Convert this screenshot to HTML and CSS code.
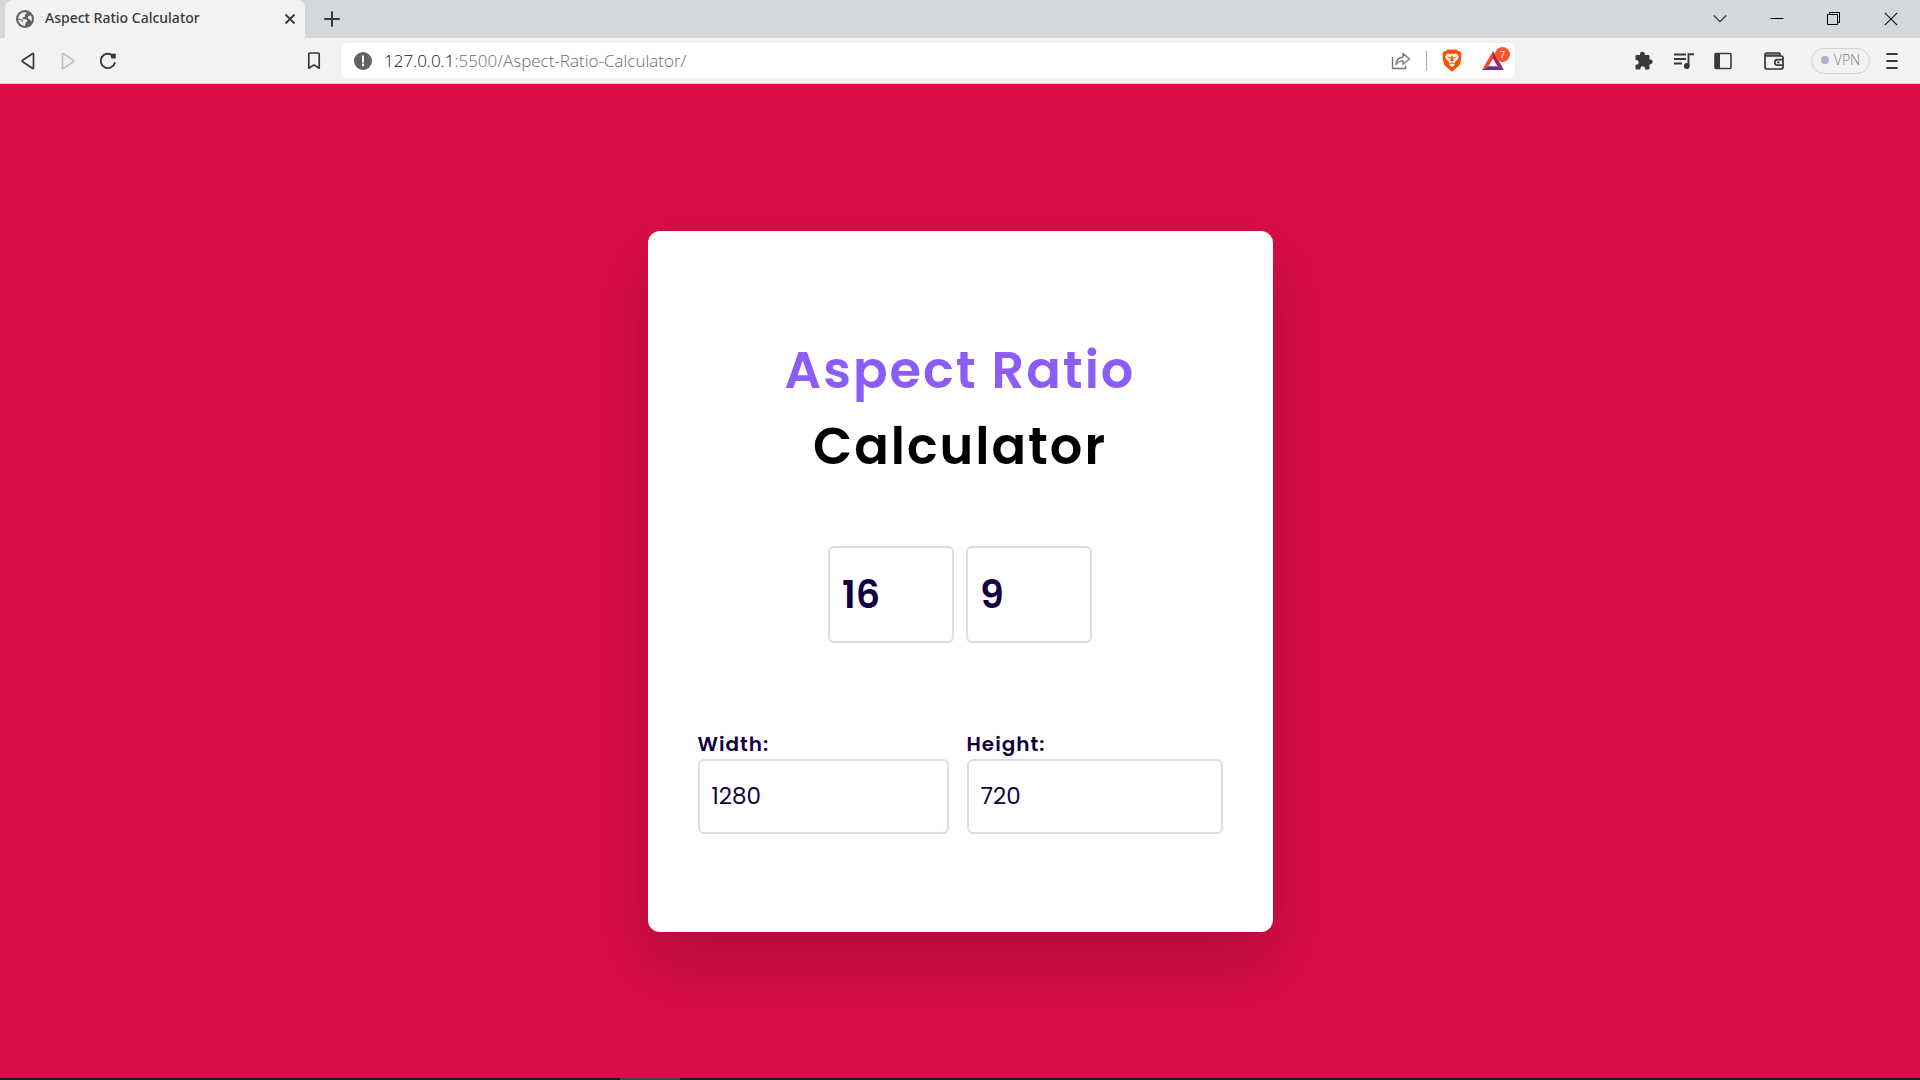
FILE: index.html
```html
<!DOCTYPE html>
<html lang="en">
<head>
<meta charset="utf-8">
<title>Aspect Ratio Calculator</title>
<link rel="stylesheet" href="styles.css">
</head>
<body>
<header class="browser">
  <div class="tabstrip">
    <div class="tab">
      <svg class="tab-icon" width="18" height="18" viewBox="0 0 18 18"><circle cx="9" cy="9" r="9" fill="#5f6368"/><path d="M2.200 8.500C2.500 5 5 2.500 8.500 2.200L11 3 8.800 5 9 6.800 6.500 7.500 6.800 9 10.500 9.500 11.500 11.500 9.500 12.500 9 15.800C5.500 15.800 2.500 13 2.200 9.500L5 10 6.500 12 7.500 11.500 6 9.200ZM12 6.500 14.800 5.300C16 7.500 16.200 9.500 15.500 11.500L13.500 9 12 8.500Z" fill="#f2f2f2"/></svg>
      <span class="tab-title">Aspect Ratio Calculator</span>
      <button class="icon-button tab-close" aria-label="Close tab"><svg width="12" height="12" viewBox="0 0 12 12"><path d="M1.500 1.500 10.500 10.500M10.500 1.500 1.500 10.500" stroke="#36393d" stroke-width="1.800"/></svg></button>
    </div>
    <button class="icon-button new-tab" aria-label="New tab"><svg width="16" height="16" viewBox="0 0 16 16"><path d="M8 1V15M1 8H15" stroke="#36393d" stroke-width="2" stroke-linecap="round"/></svg></button>
    <div class="window-controls">
      <button class="icon-button window-button" aria-label="Search tabs"><svg width="14" height="14" viewBox="0 0 14 14"><path d="M.8 3.500 7 9.700 13.200 3.500" fill="none" stroke="#333" stroke-width="1.100"/></svg></button>
      <button class="icon-button window-button" aria-label="Minimize"><svg width="14" height="14" viewBox="0 0 14 14"><path d="M.5 6.500H13.500" stroke="#000"/></svg></button>
      <button class="icon-button window-button" aria-label="Restore"><svg width="14" height="14" viewBox="0 0 14 14"><path d="M.5 2.500H10.500V12.500H.5ZM2.500 2.500V.5H12.500V10.500H10.500" fill="none" stroke="#000"/></svg></button>
      <button class="icon-button window-button" aria-label="Close"><svg width="14" height="14" viewBox="0 0 14 14"><path d="M.8.8 13.200 13.200M13.200.8.8 13.200" stroke="#111" stroke-width="1.100"/></svg></button>
    </div>
  </div>
  <div class="toolbar">
    <div class="nav">
      <button class="icon-button nav-button" aria-label="Back"><svg width="18" height="18" viewBox="0 0 18 18"><path d="M14.500 2.200V15.800Q14.500 17 13.400 16.300L3.600 9.700Q2.700 9 3.600 8.300L13.400 1.700Q14.500 1 14.500 2.200Z" fill="none" stroke="#36393d" stroke-width="1.700"/></svg></button>
      <button class="icon-button nav-button" aria-label="Forward" disabled><svg width="18" height="18" viewBox="0 0 18 18"><path d="M3.500 2.200V15.800Q3.500 17 4.600 16.300L14.400 9.700Q15.300 9 14.400 8.300L4.600 1.700Q3.500 1 3.500 2.200Z" fill="none" stroke="#c1c1c1" stroke-width="1.700"/></svg></button>
      <button class="icon-button nav-button" aria-label="Reload"><svg width="18" height="18" viewBox="0 0 18 18"><path d="M13.800 3.600A7.200 7.200 0 1 0 15.800 11" fill="none" stroke="#36393d" stroke-width="1.900" stroke-linecap="round"/><path d="M12.500 2.500Q14 1 16.800 1.800V6.600H12.600Q11 4.500 12.500 2.500Z" fill="#36393d"/></svg></button>
    </div>
    <button class="icon-button bookmark" aria-label="Bookmark"><svg width="14" height="18" viewBox="0 0 14 18"><path d="M1.800 2.200Q1.800 1 3 1H11Q12.200 1 12.200 2.200V16.200L7 12.900 1.800 16.200Z" fill="none" stroke="#36393d" stroke-width="1.700" stroke-linejoin="round"/></svg></button>
    <div class="address-bar">
      <svg class="site-info" width="18" height="18" viewBox="0 0 18 18"><circle cx="9" cy="9" r="9" fill="#5f6368"/><path d="M9 4.300V9.700M9 12.200V13.600" stroke="#fff" stroke-width="2" stroke-linecap="round"/></svg>
      <a class="url" href="#"><span class="url-host">127.0.0.1</span>:5500/Aspect-Ratio-Calculator/</a>
      <div class="address-actions">
        <button class="icon-button" aria-label="Share"><svg width="20" height="18" viewBox="0 0 20 18"><path d="M1.500 5V16.500H14.500V13.500" fill="none" stroke="#777" stroke-width="1.400"/><path d="M5 12.500C5.300 8 8 5.200 12 5.200V1.600L18.600 7 12 12.200V8.900C9 8.900 6.800 10 5 12.500Z" fill="none" stroke="#777" stroke-width="1.400" stroke-linejoin="round"/></svg></button>
        <span class="divider"></span>
        <button class="icon-button" aria-label="Brave Shields"><svg width="20" height="23" viewBox="0 0 20 23"><path d="M5.500.5H14.500L16.500 2.500 18.300 2.300 19.500 5 19 6.800 19.500 9 17.800 16 10 22.700 2.200 16 .5 9 1 6.800.5 5 1.700 2.300 3.500 2.500Z" fill="#ff5000"/><path d="M5.500 4.500 8 5 10 4.700 12 5 14.500 4.500 16.800 7.500 15.800 10.300 12.800 13 13 14.500 10 13.300 7 14.500 7.200 13 4.200 10.300 3.200 7.500ZM7 15.800 10 14.300 13 15.800 10 18.300Z" fill="#fff"/><path d="M4.800 7.600 8.800 8.200 8.300 9.900ZM15.200 7.600 11.200 8.200 11.700 9.900ZM9.300 6.500H10.700L11 10 12 11.700 10 12.700 8 11.700 9 10Z" fill="#ff5000"/></svg></button>
        <button class="icon-button rewards" aria-label="Brave Rewards, 7 new"><svg width="24" height="21" viewBox="0 0 24 21"><path d="M12 1 1 20 7.500 16.300 12 8.500Z" fill="#ff4724"/><path d="M1 20H23L16.500 16.300H7.500Z" fill="#662d91"/><path d="M12 1V8.500L16.500 16.300 23 20Z" fill="#9e1f63"/></svg><span class="badge">7</span></button>
      </div>
    </div>
    <div class="tools">
      <button class="icon-button" aria-label="Extensions"><svg width="20" height="20" viewBox="0 0 20 20"><path d="M1.500 5Q1.500 4 2.500 4H6V3.200A2.400 2.400 0 0 1 10.800 3.200V4H14.500Q15.500 4 15.500 5V8.500H16.300A2.300 2.300 0 0 1 16.300 13.200H15.500V17.500Q15.500 18.500 14.500 18.500H11V17.500A2.300 2.300 0 0 0 6.400 17.500V18.500H2.500Q1.500 18.500 1.500 17.500V13.800H2.300A2.300 2.300 0 0 0 2.300 9H1.500Z" fill="#36393d"/></svg></button>
      <button class="icon-button" aria-label="Media controls"><svg width="20" height="18" viewBox="0 0 20 18"><path d="M0 2.500H12M0 7H12M0 11.500H8M14.500 14V2.300H20" fill="none" stroke="#36393d" stroke-width="1.900"/><circle cx="12.800" cy="14" r="2.900" fill="#36393d"/></svg></button>
      <button class="icon-button" aria-label="Sidebar"><svg width="18" height="18" viewBox="0 0 18 18"><rect x="1" y="1.500" width="16" height="15" rx="1" fill="none" stroke="#36393d" stroke-width="1.600"/><path d="M1 1.500H6V16.500H1Z" fill="#36393d"/></svg></button>
      <button class="icon-button wallet" aria-label="Wallet"><svg width="20" height="18" viewBox="0 0 20 18"><path d="M1.500 1.500H15.500V4H1.500Z" fill="#777"/><path d="M1 2.500Q1 1 2.500 1H15Q16 1 16 2.500V4H17Q19 4 19 6V15Q19 17 17 17H3Q1 17 1 15ZM1 4H16" fill="none" stroke="#36393d" stroke-width="1.700"/><path d="M19 7.700H13.500A2.700 2.700 0 0 0 13.500 13.100H19M13 10.400H15.500" fill="none" stroke="#36393d" stroke-width="1.700"/></svg></button>
      <button class="vpn"><span class="vpn-dot"></span>VPN</button>
      <button class="icon-button" aria-label="Menu"><svg width="12" height="18" viewBox="0 0 12 18"><path d="M1 2H11M1 9H11M1 16H11" stroke="#36393d" stroke-width="1.800" stroke-linecap="round"/></svg></button>
    </div>
  </div>
</header>
<main class="page">
  <form class="card">
    <h1 class="title"><span class="title-accent">Aspect Ratio</span><br>Calculator</h1>
    <div class="ratio">
      <input class="field ratio-field" type="text" inputmode="numeric" value="16" aria-label="Ratio width">
      <input class="field ratio-field" type="text" inputmode="numeric" value="9" aria-label="Ratio height">
    </div>
    <div class="sizes">
      <div class="size">
        <label class="label" for="width">Width:</label>
        <input class="field size-field" id="width" type="text" inputmode="numeric" value="1280">
      </div>
      <div class="size">
        <label class="label" for="height">Height:</label>
        <input class="field size-field" id="height" type="text" inputmode="numeric" value="720">
      </div>
    </div>
  </form>
</main>
<footer class="taskbar"><span class="taskbar-item"></span></footer>
</body>
</html>
```
FILE: styles.css
```css
* {
  box-sizing: border-box;
}

body {
  margin: 0;
  min-height: 100vh;
  display: flex;
  flex-direction: column;
  background: #d80e44;
  font-family: "Open Sans", "Noto Sans", sans-serif;
}

button {
  margin: 0;
  padding: 0;
  border: 0;
  background: none;
  font: inherit;
}

.icon-button {
  display: flex;
  align-items: center;
  justify-content: center;
}

svg {
  display: block;
  flex: none;
}

/* Browser window */

.browser {
  background: #f2f2f2;
  border-bottom: 1px solid #d4d8db;
}

.tabstrip {
  display: flex;
  align-items: center;
  height: 38px;
  padding-left: 5px;
  background: #d4d8db;
}

.tab {
  display: flex;
  align-items: center;
  width: 300px;
  height: 38px;
  padding: 0 9px 0 11px;
  border-radius: 8px 8px 0 0;
  background: #f2f2f2;
}

.tab-title {
  flex: 1;
  margin-left: 11px;
  color: #36393d;
  font-family: "Noto Sans", sans-serif;
  font-size: 14px;
  font-weight: 500;
  line-height: 20px;
  padding-bottom: 2px;
  white-space: nowrap;
}

.new-tab {
  margin-left: 19px;
}

.window-controls {
  display: flex;
  margin: 0 1px 0 auto;
}

.window-button {
  width: 57px;
  height: 38px;
}

.toolbar {
  display: flex;
  align-items: center;
  height: 45px;
  padding: 0 22px 0 8px;
}

.nav {
  display: flex;
}

.nav-button {
  width: 40px;
  height: 36px;
}

.bookmark {
  margin-left: 179px;
}

.address-bar {
  flex: 1;
  display: flex;
  align-items: center;
  height: 35px;
  margin: 0 119px 0 20px;
  padding: 0 10px 0 13px;
  border-radius: 6px;
  background: #fff;
}

.url {
  margin-left: 12px;
  color: #6b6b6b;
  font-size: 17px;
  font-weight: 300;
  text-decoration: none;
  white-space: nowrap;
}

.url-host {
  color: #111;
}

.address-actions {
  display: flex;
  align-items: center;
  gap: 15px;
  margin-left: auto;
}

.divider {
  width: 1px;
  height: 20px;
  background: #aaa;
}

.rewards {
  position: relative;
  margin-left: 4px;
}

.badge {
  position: absolute;
  top: -3px;
  right: -5px;
  width: 15px;
  border-radius: 8px;
  background: #fb542b;
  color: #fff;
  font-size: 9px;
  line-height: 15px;
}

.tools {
  display: flex;
  align-items: center;
  gap: 20px;
}

.wallet {
  margin-left: 12px;
}

.vpn {
  display: flex;
  align-items: center;
  justify-content: center;
  gap: 5px;
  width: 59px;
  height: 26px;
  margin: 0 -4px 0 7px;
  padding-bottom: 2px;
  border: 1px solid #d0d4d8;
  border-radius: 13px;
  color: #76828c;
  font-size: 14px;
  font-weight: 300;
}

.vpn-dot {
  width: 8px;
  height: 8px;
  border-radius: 50%;
  background: #aeb1c8;
}

/* Calculator */

.page {
  flex: 1;
  display: flex;
  align-items: center;
  justify-content: center;
  color: #130040;
  font-family: "Poppins", "Inter", sans-serif;
}

.card {
  width: 625px;
  max-width: 100%;
  padding: 101px 50px 98px;
  border-radius: 12px;
  background: #fff;
  box-shadow: 0 30px 60px rgba(19, 0, 30, 0.2);
}

.title {
  margin: 0 0 62px;
  color: #000;
  font-size: 51px;
  font-weight: 600;
  line-height: 76px;
  letter-spacing: 2px;
  text-align: center;
}

.title-accent {
  color: #8b5cf6;
}

.ratio {
  display: flex;
  justify-content: center;
  gap: 12px;
  margin-bottom: 86px;
}

.field {
  border: 2px solid #dcdde1;
  border-radius: 6px;
  padding: 0 12px;
  background: #fff;
  color: inherit;
  font-family: inherit;
}

.ratio-field {
  width: 126px;
  height: 97px;
  font-size: 38px;
  font-weight: 600;
}

.sizes {
  display: grid;
  grid-template-columns: 251px 1fr;
  gap: 18px;
}

.size {
  display: flex;
  flex-direction: column;
}

.label {
  font-size: 20px;
  font-weight: 600;
  line-height: 30px;
  letter-spacing: 1px;
}

.size-field {
  width: 100%;
  height: 75px;
  font-size: 23px;
}

.taskbar {
  height: 2px;
  padding-left: 620px;
  background: #1c1c1c;
}

.taskbar-item {
  display: block;
  width: 60px;
  height: 2px;
  background: #484848;
}
```
